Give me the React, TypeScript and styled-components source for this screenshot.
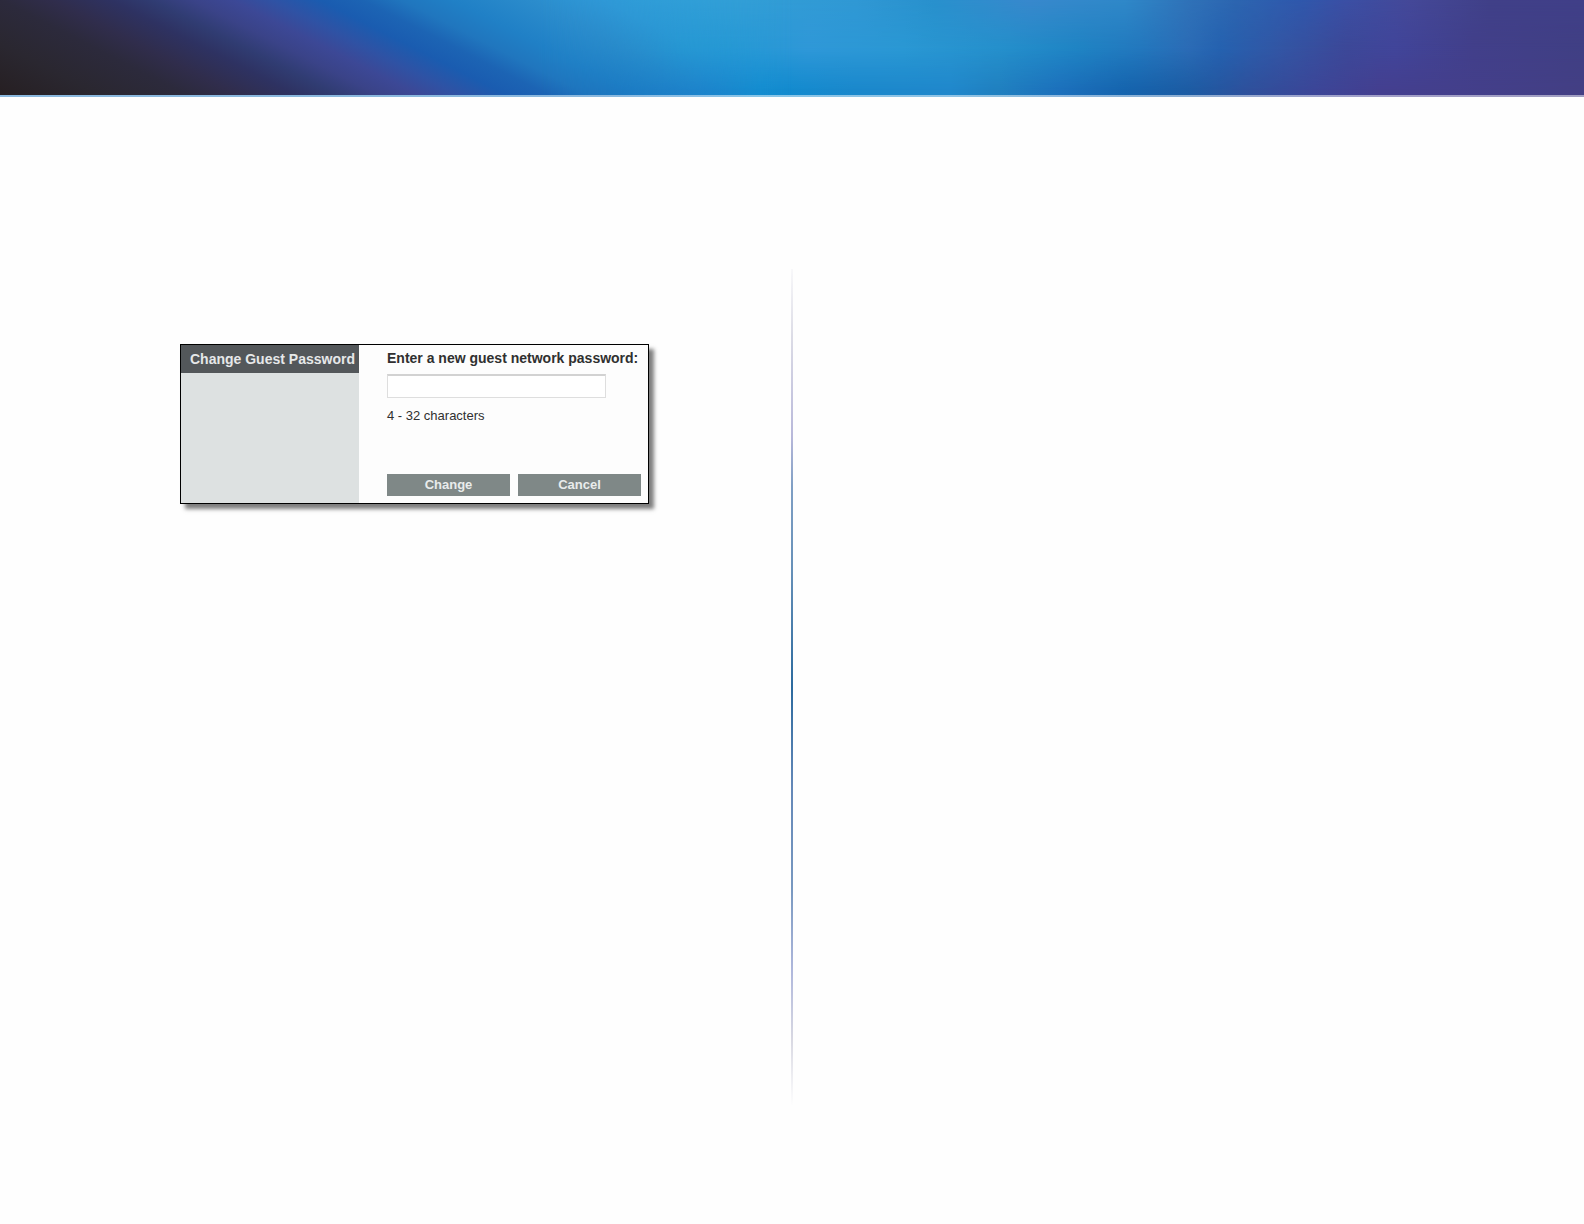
import React from "react";
import styled, { createGlobalStyle } from "styled-components";

const GlobalStyle = createGlobalStyle`
  *, *::before, *::after { box-sizing: border-box; }
  body {
    margin: 0;
    background: #fefefe;
    font-family: "Liberation Sans", Arial, sans-serif;
  }
`;

/* Colour bands of the banner: along its top, middle and bottom. */
const topBand = `linear-gradient(90deg, #2f98d6 38%, #2f9ed8 40%,
  #339ed6 47%, #3098d4 54%, #2890cc 59%, #3888cc 65%, #2f88c8 71%, #2f72b8 75%, #2c65b0 78%, #2f58ac 82%,
  #3b4fa4 85%, #444898 89%, #404088 94%, #403f88 100%)`;
const middleBand = `linear-gradient(90deg, #2488c8 38%, #2098d2 43%, #2398d4 46%,
  #2f98d8 51%, #2a98d4 57%, #2590cc 63%, #1f84c4 68%, #2378be 72%, #2b6cb6 75%, #2562b0 77%, #3355a4 81%,
  #3c4898 85%, #41459a 88%, #423f8a 93%, #403f84 100%)`;
const bottomBand = `linear-gradient(90deg, #1470bc 38%, #1680cc 44%, #108cd0 48%, #1a88cc 54%,
  #2088cc 60%, #2080c0 63%, #1c70bc 67%, #1564ae 71%, #1c5ca4 75%, #2f509c 79%, #3c4698 83%, #443f90 87%,
  #433f84 100%)`;
/* Diagonal sweep from the dark corner into the bright middle. */
const sweep = `linear-gradient(27deg, #261f22 0px, #2a2730 45px, #2c2a3c 85px, #302d4c 108px, #2e3262 135px,
  #303c72 153px, #3a4388 172px, #3c4896 190px, #2f52a4 208px, #1a5cb0 230px, #1c64b4 249px, #2076be 267px,
  #2080c6 290px, #2b8ccc 326px, #2f98d6 358px, #30a0d8 403px)`;

const Page = styled.div`
  min-height: 100vh;
  display: flex;
  flex-direction: column;
`;

const Banner = styled.header`
  height: 97px;
  display: grid;
  background: ${bottomBand};
  border-bottom: 2px solid rgba(255, 255, 255, 0.5);

  &::before,
  &::after {
    content: "";
    grid-area: 1 / 1;
  }
  &::before {
    background: ${middleBand};
    mask-image: linear-gradient(#000 50%, transparent 95%);
  }
  &::after {
    background: ${topBand};
    mask-image: linear-gradient(#000, transparent 50%);
  }
`;

const Sweep = styled.div`
  grid-area: 1 / 1;
  z-index: 1;
  background: ${sweep};
  mask-image: linear-gradient(90deg, #000 34%, transparent 50%);
`;

const Spread = styled.main`
  flex: 1;
  display: grid;
  grid-template-columns: 1fr 2px 1fr;
  padding: 172px 0 118px;
`;

const Column = styled.section`
  padding: 75px 0 0 180px;
`;

const Divider = styled.div`
  background: linear-gradient(
    #f8f8fa 0%, #dcdce6 8%, #b8b8da 20%, #7f9fc4 26%, #6690b8 36%,
    #2c6a9e 50%, #6488b8 62%, #7898c0 74%, #b0b8dc 84%, #d8d8e2 92%, #fefefe 100%
  );
`;

const Dialog = styled.form`
  width: 469px;
  display: grid;
  grid-template-columns: 178px 1fr;
  border: 1px solid #000;
  background: #fdfdfd;
  box-shadow: 5px 5px 4px rgba(0, 0, 0, 0.5);
`;

const Sidebar = styled.div`
  background: #dde1e1;
`;

const Title = styled.h1`
  margin: 0;
  padding-left: 9px;
  background: #53575a;
  color: #e6e8e9;
  font: bold 14px/28px "Liberation Sans", Arial, sans-serif;
  white-space: nowrap;
`;

const Body = styled.div`
  display: flex;
  flex-direction: column;
  padding: 4px 7px 7px 28px;
`;

const Label = styled.label`
  color: #303030;
  font: bold 14px/18px "Liberation Sans", Arial, sans-serif;
  white-space: nowrap;
`;

const PasswordInput = styled.input`
  width: 219px;
  height: 24px;
  margin-top: 7px;
  padding: 0 6px;
  border: 1px solid #dedede;
  border-top: 2px solid #d2d2d2;
  border-radius: 0;
  background: #fff;
  font: 13px "Liberation Sans", Arial, sans-serif;
`;

const Hint = styled.p`
  margin: 9px 0 49px;
  color: #303030;
  font-size: 13px;
  line-height: 18px;
`;

const Actions = styled.div`
  display: grid;
  grid-template-columns: 1fr 1fr;
  gap: 8px;
`;

const Button = styled.button`
  height: 22px;
  padding: 0;
  border: 0;
  background: #7f8887;
  color: #e9ecec;
  font: bold 13px/22px "Liberation Sans", Arial, sans-serif;
`;

export default function App() {
  return (
    <>
      <GlobalStyle />
      <Page>
        <Banner>
          <Sweep />
        </Banner>
        <Spread>
          <Column>
            <Dialog onSubmit={(event) => event.preventDefault()}>
              <Sidebar>
                <Title>Change Guest Password</Title>
              </Sidebar>
              <Body>
                <Label htmlFor="guest-password">Enter a new guest network password:</Label>
                <PasswordInput
                  id="guest-password"
                  type="text"
                  minLength={4}
                  maxLength={32}
                  aria-describedby="guest-password-hint"
                />
                <Hint id="guest-password-hint">4 - 32 characters</Hint>
                <Actions>
                  <Button type="submit">Change</Button>
                  <Button type="button">Cancel</Button>
                </Actions>
              </Body>
            </Dialog>
          </Column>
          <Divider />
        </Spread>
      </Page>
    </>
  );
}
